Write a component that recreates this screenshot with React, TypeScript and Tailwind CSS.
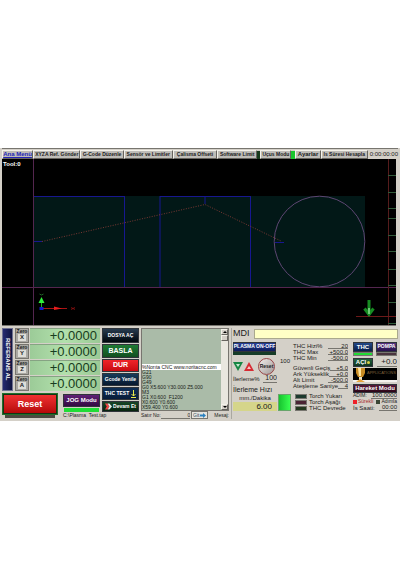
import type { ReactNode } from 'react';
import clsx from 'clsx';

const axes = ['X', 'Y', 'Z', 'A'];

const gcode = [
    'G21',
    'G90',
    'G49',
    'G0 X5.600 Y30.000 Z5.000',
    'M3',
    'G1 X0.600  F1200',
    'X0.600 Y0.600',
    'X59.400 Y0.600',
];

const thcSettings = [
    { label: 'THC Hizi%', value: '20' },
    { label: 'THC Max', value: '+500.0' },
    { label: 'THC Min', value: '-500.0' },
];

const cutSettings = [
    { label: 'Güvenli Geçiş', value: '+5.0' },
    { label: 'Ark Yükseklik', value: '+0.0' },
    { label: 'Alt Limit', value: '-500.0' },
    { label: 'Ateşleme Saniye', value: '4' },
];

const torchStates = [
    { label: 'Torch Yukarı', color: 'bg-[#1d3a2e]' },
    { label: 'Torch Aşağı', color: 'bg-[#4a2434]' },
    { label: 'THC Devrede', color: 'bg-[#23391f]' },
];

const raised = 'border border-t-[#f4f2ea] border-l-[#f4f2ea] border-b-[#66645e] border-r-[#66645e]';

function MenuButton({ children, className }: { children: ReactNode; className?: string }) {
    return (
        <button className={clsx('h-[9px] whitespace-nowrap bg-[#bfbdb8] text-center font-bold leading-[7px]', raised, className)}>
            {children}
        </button>
    );
}

function PanelButton({ children, className }: { children: ReactNode; className?: string }) {
    return (
        <button className={clsx('flex w-full items-center justify-center whitespace-nowrap border border-[#30343a] font-bold text-white', className)}>
            {children}
        </button>
    );
}

function Setting({ label, value }: { label: string; value: string }) {
    return (
        <label className="flex h-[6px] items-center justify-between whitespace-nowrap">
            {label}
            <input className="h-[6px] w-0 min-w-[10px] max-w-[20px] flex-1 border-b border-[#77756f] bg-transparent text-right outline-none" defaultValue={value} />
        </label>
    );
}

function Toolpath() {
    return (
        <svg viewBox="0 0 394 166" className="block w-full bg-black" fill="none">
            <text x="1" y="7" fill="#fff" fontSize="6" fontWeight="bold">Tool:0</text>
            <rect x="31" y="37" width="332" height="91" fill="#021817" />
            <g stroke="#17178f">
                <rect x="31.5" y="37.5" width="91" height="91" />
                <rect x="158" y="37.5" width="90.500" height="91" />
                <path d="M31 82.500h9M203 37v8M273 83.500h9" />
            </g>
            <path d="M40 82.500 203 45.500 279 82" stroke="#873b35" strokeDasharray="1 1.500" strokeWidth=".9" />
            <circle cx="317.500" cy="82.500" r="45.300" stroke="#5d4672" />
            <path d="M31.500 0v166M0 128.500h394" stroke="#54264f" />
            <path d="M386.500 0v166" stroke="#561c1c" />
            <path d="M386 16.500h8M386 33.500h8M386 49.500h8M386 59.500h8M386 76.500h8M386 92.500h8M386 110.500h8M386 126.500h8M386 143.500h8M386 164.500h8" stroke="#315b39" />
            <path d="M39.500 149v-9" stroke="#1cae28" />
            <path d="m39.500 138 3 6h-6z" fill="#2ff03c" />
            <path d="m37.500 135 2 1 2-1" stroke="#2b8c35" strokeWidth=".7" />
            <path d="M41 149.500h24" stroke="#a81313" />
            <path d="M52 147.500 60 149.500 52 151z" fill="#e81d1d" />
            <path d="m69 148.500 4 2m0-2-4 2" stroke="#a81313" strokeWidth=".7" />
            <rect x="37.500" y="148" width="4" height="3" fill="#1616d0" />
            <path d="M354 157.500h40" stroke="#6d1919" />
            <path d="M367 141v14M362.500 149.500l4.500 6 4.500-6" stroke="#178d22" strokeWidth="3" />
            <path d="M367 149v6" stroke="#70c878" strokeWidth="2" />
        </svg>
    );
}

function MenuBar() {
    return (
        <nav className="grid grid-cols-[31fr_47fr_43fr_49fr_44fr_40fr_3fr_31fr_4fr_25fr_47fr_30fr] items-center border-t border-[#77756f] pt-px text-[5px]">
            <MenuButton className="text-[6px] text-[#2323b8] underline">Ana Menü</MenuButton>
            <MenuButton>XYZA Ref. Gönder</MenuButton>
            <MenuButton>G-Code Düzenle</MenuButton>
            <MenuButton>Sensör ve Limitler</MenuButton>
            <MenuButton>Çalisma Offseti</MenuButton>
            <MenuButton>Software Limit</MenuButton>
            <span className="h-2 bg-[#173a1b]" />
            <MenuButton>Uçus Modu</MenuButton>
            <span className="h-2 bg-[#19c52e]" />
            <MenuButton className="text-[6px]">Ayarlar</MenuButton>
            <MenuButton>Is Süresi Hesapla</MenuButton>
            <time className="text-right text-[6px] leading-[9px]">0:00:00:00</time>
        </nav>
    );
}

function AxisPanel() {
    return (
        <section className="flex min-w-0 flex-col">
            <div className="flex gap-[2px]">
                <button className="flex w-[11px] shrink-0 items-center justify-center border border-[#6e7090] bg-gradient-to-r from-[#252a70] to-[#101440] text-[6px] font-bold text-white">
                    <span className="whitespace-nowrap [writing-mode:vertical-rl]">REFERANS AL</span>
                </button>
                <div className="flex flex-1 flex-col gap-px">
                    {axes.map((axis) => (
                        <div key={axis} className="flex h-[15px] gap-px">
                            <button className="flex w-[14px] shrink-0 flex-col items-center border border-[#77756f] bg-[#aaa8a3] text-[5px] font-bold leading-[5px]">
                                Zero
                                <span className="w-2 bg-[#deddd8] text-[6px] leading-[7px]">{axis}</span>
                            </button>
                            <output className="flex-1 border-t border-[#86a383] bg-gradient-to-r from-[#9ccb98] via-[#b2e0ac] to-[#9bc995] pr-[3px] text-right text-[13px] leading-[14px] text-[#173d20]">
                                +0.0000
                            </output>
                        </div>
                    ))}
                </div>
            </div>
            <div className="mt-[2px] flex justify-between">
                <div className="w-[56px]">
                    <button className="block h-[22px] w-full border-2 border-[#123414] bg-gradient-to-b from-[#f03030] to-[#b60808] text-[9px] font-bold leading-[16px] text-white outline outline-1 -outline-offset-1 outline-[#22702a]">
                        Reset
                    </button>
                    <div className="mx-[3px] h-[3px] bg-[#4b4a40]" />
                </div>
                <div className="mt-px w-[37px]">
                    <PanelButton className="h-[13px] bg-gradient-to-b from-[#602075] to-[#340943] text-[6px]">JOG Modu</PanelButton>
                    <div className="mx-px mt-px h-[4px] bg-[#20dc36]" />
                    <p className="whitespace-pre text-[5px] leading-[6px]">C:\Plasma  Test.tap</p>
                </div>
            </div>
        </section>
    );
}

function ProgramButtons() {
    return (
        <section className="flex flex-col gap-px">
            <PanelButton className="h-[15px] bg-gradient-to-b from-[#283c50] to-[#03080e] text-[5px]">DOSYA AÇ</PanelButton>
            <PanelButton className="h-[14px] bg-gradient-to-b from-[#207c34] to-[#125020] text-[7px]">BASLA</PanelButton>
            <PanelButton className="h-[13px] bg-gradient-to-b from-[#f02329] to-[#c80810] text-[7px]">DUR</PanelButton>
            <PanelButton className="h-[13px] bg-gradient-to-b from-[#173b5a] to-[#08192f] text-[5px]">Gcode Yenile</PanelButton>
            <PanelButton className="h-[13px] gap-[2px] bg-gradient-to-b from-[#102f54] to-[#071c3b] text-[5px]">
                THC TEST
                <svg viewBox="0 0 5 8" className="h-2 w-[5px]" fill="none" stroke="#e9e94a"><path d="M2.500 0v6M.5 4l2 2 2-2M0 7.500h5" /></svg>
            </PanelButton>
            <PanelButton className="h-[11px] gap-px bg-gradient-to-b from-[#174727] to-[#08240f] text-[5px]">
                <svg viewBox="0 0 8 7" className="h-[7px] w-[7px] shrink-0"><path d="M0 0h3l2 3.500L3 7H0l2-3.500z" fill="#f04444" /><path d="M3 0h2l3 3.500L5 7H3l2-3.500z" fill="#e6eee6" /></svg>
                Devam Et
            </PanelButton>
        </section>
    );
}

function CodePanel() {
    return (
        <section className="min-w-0 text-[5px]">
            <div className="flex h-[83px] border border-[#77756f] bg-[#aabba8]">
                <div className="flex-1 whitespace-pre leading-[5px] text-[#182018]">
                    <p className="mt-[35px] bg-white leading-[6px]">%Norıta CNC www.noritacnc.com</p>
                    {gcode.map((line) => <p key={line}>{line}</p>)}
                </div>
                <div className="flex w-[7px] flex-col justify-between bg-[#e9e7df]">
                    <div>
                        <button aria-label="Yukarı" className={clsx('flex h-[6px] w-full items-center justify-center bg-[#d4d0c8]', raised)}>
                            <svg viewBox="0 0 4 2" className="w-[4px]"><path d="m2 0 2 2H0z" /></svg>
                        </button>
                        <div className={clsx('h-[6px] bg-[#d4d0c8]', raised)} />
                    </div>
                    <button aria-label="Aşağı" className={clsx('flex h-[6px] w-full items-center justify-center bg-[#d4d0c8]', raised)}>
                        <svg viewBox="0 0 4 2" className="w-[4px]"><path d="M0 0h4L2 2z" /></svg>
                    </button>
                </div>
            </div>
            <div className="flex h-2 items-center leading-[8px]">
                <label htmlFor="line" className="shrink-0 whitespace-nowrap">Satır No:</label>
                <input id="line" className="h-[7px] w-0 min-w-0 flex-1 border-b border-[#77756f] bg-transparent text-right outline-none" defaultValue="0" />
                <button className="ml-px flex h-[8px] w-[17px] shrink-0 items-center justify-center gap-px border border-[#77756f] bg-[#e5e4df] leading-[6px] text-[#304860]">
                    Git
                    <svg viewBox="0 0 6 5" className="h-[5px] w-[6px]" fill="#2b80c0"><path d="M0 1.500h3V0l3 2.500L3 5V3.500H0z" /></svg>
                </button>
                <span className="ml-[6px] shrink-0">Mesaj:</span>
            </div>
        </section>
    );
}

function FeedPanel() {
    return (
        <section className="w-[58px] shrink-0">
            <div className="w-[43px]">
                <PanelButton className="h-[10px] bg-gradient-to-b from-[#263f98] to-[#0e1c5c] text-[5px]">PLASMA ON-OFF</PanelButton>
                <div className="h-[3px] bg-[#163c28]" />
            </div>
            <div className="mt-[2px] flex h-[18px] items-center">
                <button aria-label="Hız azalt">
                    <svg viewBox="0 0 10 9" className="block h-[9px] w-[10px]"><path d="M0 0h10L5 9z" fill="#168744" /><path d="M3 2h4L5 5z" fill="#c4ead0" /></svg>
                </button>
                <button aria-label="Hız artır" className="ml-px">
                    <svg viewBox="0 0 10 9" className="block h-[9px] w-[10px]"><path d="M5 0l5 9H0z" fill="#d72c35" /><path d="M5 4l2 3H3z" fill="#f8c8c8" /></svg>
                </button>
                <button className="ml-[4px] h-[17px] w-[17px] shrink-0 rounded-full border border-[#984648] bg-gradient-to-br from-[#f2eeec] to-[#a29a98] text-[5px] font-bold leading-[15px]">
                    Reset
                </button>
                <span className="ml-[5px] self-start text-[6px] leading-[8px]">100</span>
            </div>
            <label className="flex h-[8px] w-[44px] items-center justify-between text-[6px]">
                İlerleme%
                <input className="h-[8px] w-[14px] border-b border-[#77756f] bg-transparent text-right text-[7px] outline-none" defaultValue="100" />
            </label>
            <div className="flex items-end justify-between">
                <div className="w-[44px]">
                    <h2 className="mt-[2px] whitespace-nowrap text-[7px] leading-[9px]">İlerleme Hızı</h2>
                    <label htmlFor="feed" className="block text-center text-[6px] leading-[8px]">mm./Dakika</label>
                    <input id="feed" className="block h-[9px] w-full bg-[#d5d58a] pr-[5px] text-right text-[8px] outline-none" defaultValue="6.00" />
                </div>
                <div className="h-[17px] w-[13px] border border-[#68a56b] bg-gradient-to-r from-[#16c42f] to-[#38ff50]" />
            </div>
        </section>
    );
}

function TorchPanel() {
    return (
        <section className="ml-[2px] mt-px w-[55px] text-[6px] leading-[6px]">
            {thcSettings.map((item) => <Setting key={item.label} {...item} />)}
            <div className="mt-1">
                {cutSettings.map((item) => <Setting key={item.label} {...item} />)}
            </div>
            <ul className="ml-[2px] mt-1">
                {torchStates.map((state) => (
                    <li key={state.label} className="flex h-[6px] items-center gap-[2px] whitespace-nowrap">
                        <span className={clsx('h-[5px] w-[12px] border border-[#77756f]', state.color)} />
                        {state.label}
                    </li>
                ))}
            </ul>
        </section>
    );
}

function MotionPanel() {
    return (
        <section className="ml-auto mr-px w-[44px] shrink-0 text-[5px]">
            <div className="flex justify-between">
                <div className="w-[20px]">
                    <PanelButton className="h-[10px] bg-gradient-to-b from-[#244987] to-[#081d4b] text-[6px]">THC</PanelButton>
                    <div className="h-[4px] border border-[#77756f] bg-[#20db35]" />
                </div>
                <div className="w-[21px]">
                    <PanelButton className="h-[10px] bg-gradient-to-b from-[#563381] to-[#27104c] text-[5px]">POMPA</PanelButton>
                    <div className="h-[4px] border border-[#77756f] bg-[#49343e]" />
                </div>
            </div>
            <div className="mt-[2px] flex items-end justify-between">
                <div className="w-[20px]">
                    <PanelButton className="h-[9px] gap-px bg-gradient-to-b from-[#23633b] to-[#0e3320] text-[6px]">
                        AÇI
                        <svg viewBox="0 0 3 3" className="w-[3px]" fill="#d8cf45"><circle cx="1.500" cy="1.500" r="1.500" /></svg>
                    </PanelButton>
                </div>
                <input aria-label="Açı" className="h-[9px] w-[20px] border-b border-[#77756f] bg-transparent text-right text-[8px] outline-none" defaultValue="+0.0" />
            </div>
            <svg viewBox="0 0 44 14" className="mt-px block h-[14px] w-full bg-black">
                <path d="M0 12h44v2H0z" fill="#f4f1ed" />
                <path d="M3 0h9v5l-2 4H5L3 5z" fill="#c88b23" />
                <path d="M5 0h3v8H6z" fill="#ffe49b" />
                <path d="M6 9h3v3H6z" fill="#ede3c5" />
                <path d="M3 14l4-3 5 3z" fill="#e7a43c" />
                <text x="14" y="6" fill="#83643b" fontSize="4">APPLICATIONS</text>
            </svg>
            <PanelButton className="mt-[2px] h-[9px] bg-gradient-to-b from-[#571938] to-[#2c0718] text-[6px]">Hareket Modu</PanelButton>
            <label className="flex h-[6px] items-center justify-between">
                ADIM:
                <input className="h-[6px] w-[26px] border-b border-[#77756f] bg-transparent text-right text-[6px] outline-none" defaultValue="100.0000" />
            </label>
            <div className="flex h-[6px] items-center whitespace-nowrap">
                <span className="mr-px h-[4px] w-[4px] bg-[#ee2028]" />
                <span className="text-[#a62b2b]">Sürekli</span>
                <span className="ml-auto mr-px h-[4px] w-[4px] bg-[#3b4635]" />
                Adımla
            </div>
            <div className="flex h-[6px] items-center justify-between text-[6px]">
                <span>İs Saati:</span>
                <time className="w-[18px] border-b border-[#77756f] text-right leading-[5px]">00:00</time>
            </div>
        </section>
    );
}

export default function App() {
    return (
        <div className="bg-white pt-[148px] font-['Liberation_Sans',Arial,sans-serif] text-[#202020]">
            <main className="bg-[#d4d0c8] px-[2px] pb-[2px]">
                <MenuBar />
                <div className="mr-[2px] border-b border-[#77756f]">
                    <Toolpath />
                </div>
                <div className="mt-[2px] grid grid-cols-[98fr_37fr_88fr_167fr] gap-x-[2px]">
                    <AxisPanel />
                    <ProgramButtons />
                    <CodePanel />
                    <div className="min-w-0 border-l border-[#aaa8a1] pl-px">
                        <label className="flex h-[11px] items-center gap-[4px] text-[9px] leading-[11px]">
                            MDI
                            <input className="h-[10px] min-w-0 flex-1 border border-[#aaa88d] bg-[#ffffc6] text-[7px] outline-none" />
                        </label>
                        <div className="mt-[3px] flex">
                            <FeedPanel />
                            <TorchPanel />
                            <MotionPanel />
                        </div>
                    </div>
                </div>
            </main>
        </div>
    );
}
